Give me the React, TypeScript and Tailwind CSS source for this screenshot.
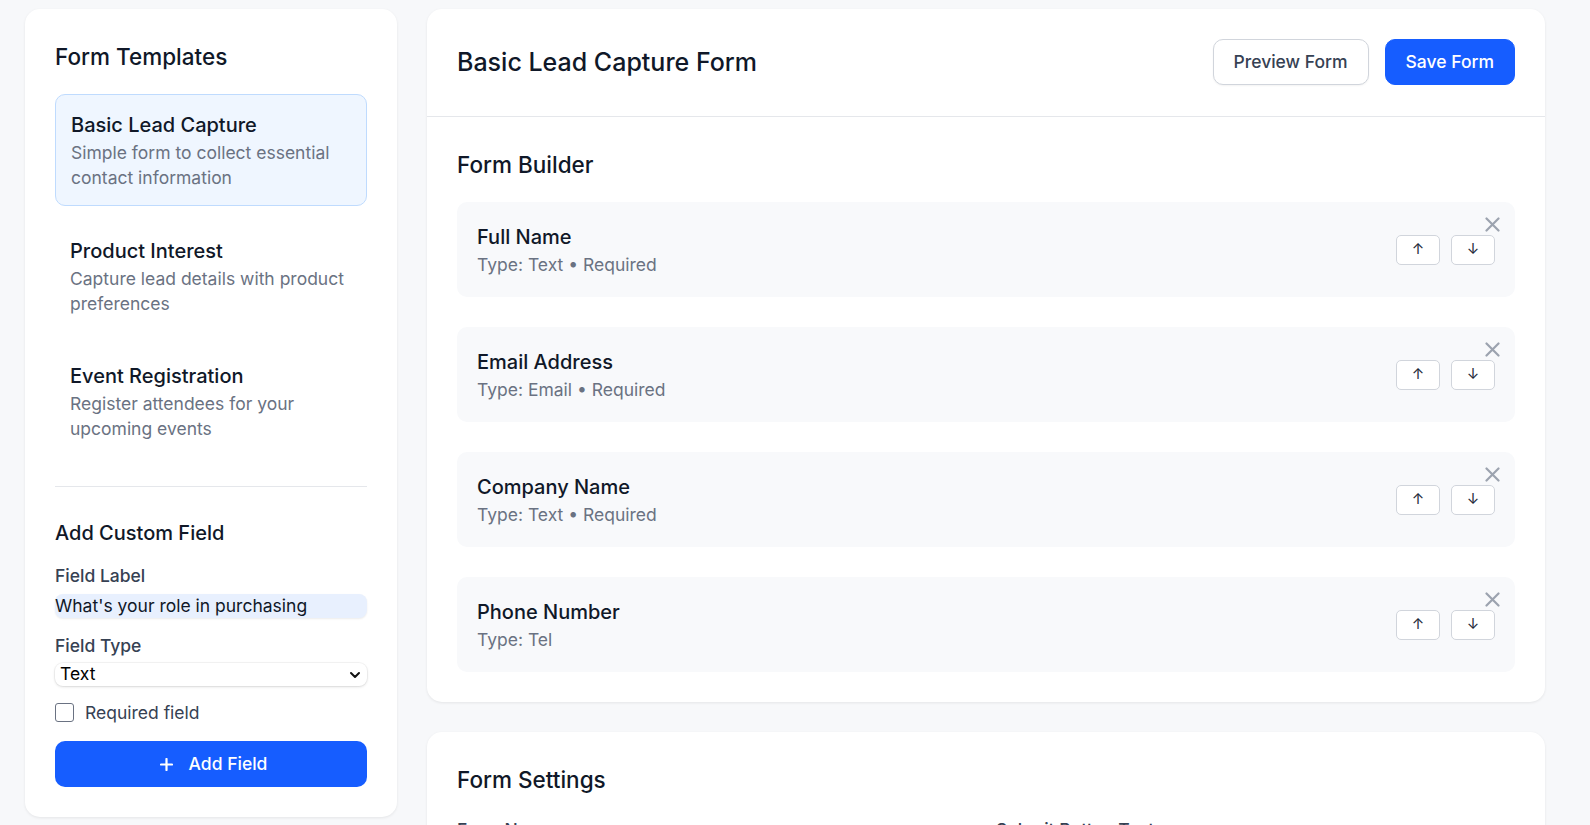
const templates = [
  {
    title: "Basic Lead Capture",
    desc: "Simple form to collect essential contact information",
    active: true,
  },
  {
    title: "Product Interest",
    desc: "Capture lead details with product preferences",
    active: false,
  },
  {
    title: "Event Registration",
    desc: "Register attendees for your upcoming events",
    active: false,
  },
];

const fields = [
  { label: "Full Name", meta: "Type: Text • Required" },
  { label: "Email Address", meta: "Type: Email • Required" },
  { label: "Company Name", meta: "Type: Text • Required" },
  { label: "Phone Number", meta: "Type: Tel" },
];

function CloseIcon() {
  return (
    <svg width="15" height="15" viewBox="0 0 15 15" fill="none">
      <path d="M1.5 1.5l12 12M13.5 1.5l-12 12" stroke="#9ca3af" strokeWidth="2.2" strokeLinecap="round" />
    </svg>
  );
}

function FieldRow({ label, meta }: { label: string; meta: string }) {
  return (
    <div className="relative flex h-[95px] items-center justify-between rounded-[10px] bg-[#f8f9fb] px-5">
      <div>
        <p className="text-[20px] leading-[30px] font-medium text-gray-900">{label}</p>
        <p className="text-[17.5px] leading-[25px] text-gray-500">{meta}</p>
      </div>
      <div className="flex gap-[11px]">
        <button className="flex h-[30px] w-[44px] items-center justify-center rounded-[5px] border border-gray-300 bg-white text-[15px] text-gray-800">
          ↑
        </button>
        <button className="flex h-[30px] w-[44px] items-center justify-center rounded-[5px] border border-gray-300 bg-white text-[15px] text-gray-800">
          ↓
        </button>
      </div>
      <span className="absolute top-[15px] right-[15px] flex">
        <CloseIcon />
      </span>
    </div>
  );
}

export default function App() {
  return (
    <div className="h-[825px] overflow-hidden bg-[#f7f8fa] pt-[9px] pl-[25px] font-['Inter',sans-serif] text-gray-900">
      <div className="flex items-start gap-[30px]">
        {/* sidebar */}
        <aside className="w-[372px] shrink-0 rounded-[15px] bg-white p-7.5 shadow-[0_1px_3px_rgba(0,0,0,0.08)]">
          <h2 className="text-[22.5px] leading-[35px] font-medium">Form Templates</h2>
          <div className="mt-5 flex flex-col gap-[15px]">
            {templates.map((t) => (
              <div
                key={t.title}
                className={
                  t.active
                    ? "rounded-[10px] border border-[#bfdbfe] bg-[#eff6ff] p-[15px]"
                    : "rounded-[10px] p-[15px]"
                }
              >
                <p className="text-[20px] leading-[30px] font-medium text-gray-900">{t.title}</p>
                <p className="text-[17.5px] leading-[25px] text-gray-500">{t.desc}</p>
              </div>
            ))}
          </div>

          <div className="mt-7.5 border-t border-gray-200 pt-[31px]">
            <h2 className="text-[20px] leading-[30px] font-medium">Add Custom Field</h2>

            <p className="mt-[15px] text-[17.5px] leading-[25px] font-medium text-gray-700">Field Label</p>
            <div className="mt-[6px] flex h-6 items-center rounded-lg bg-[#e8f0fe] text-[17.5px] text-gray-900 shadow-[0_1px_2px_rgba(0,0,0,0.08)]">
              What's your role in purchasing
            </div>

            <p className="mt-[15px] text-[17.5px] leading-[25px] font-medium text-gray-700">Field Type</p>
            <div className="mt-[5px] flex h-[23px] items-center justify-between rounded-lg bg-white pr-1.5 pl-[5px] text-[17.5px] text-black shadow-[0_0_0_1px_rgba(0,0,0,0.04),0_1px_3px_rgba(0,0,0,0.12)]">
              <span>Text</span>
              <svg width="12" height="12" viewBox="0 0 12 12" fill="none">
                <path d="M2 4l4 4 4-4" stroke="#111" strokeWidth="2" strokeLinecap="round" strokeLinejoin="round" />
              </svg>
            </div>

            <label className="mt-[14px] flex h-[25px] items-center gap-[11px]">
              <span className="h-[19px] w-[19px] rounded-[3px] border-[1.5px] border-gray-500 bg-white" />
              <span className="text-[17.5px] leading-[25px] text-gray-700">Required field</span>
            </label>

            <button className="mt-4 flex h-[46px] w-full items-center justify-center gap-4 rounded-[10px] bg-[#165dff] pl-[5px] text-[17.5px] font-medium text-white">
              <svg width="13" height="13" viewBox="0 0 13 13" fill="none">
                <path d="M6.5 1v11M1 6.5h11" stroke="white" strokeWidth="2.2" strokeLinecap="round" />
              </svg>
              Add Field
            </button>
          </div>
        </aside>

        {/* main */}
        <main className="flex w-[1118px] shrink-0 flex-col gap-[30px]">
          <section className="rounded-[15px] bg-white shadow-[0_1px_3px_rgba(0,0,0,0.08)]">
            <div className="flex items-center justify-between border-b border-gray-200 px-7.5 pt-7.5 pb-[31px]">
              <h1 className="text-[25px] leading-[35px] font-medium">Basic Lead Capture Form</h1>
              <div className="flex gap-4">
                <button className="h-[46px] rounded-[10px] border border-gray-300 bg-white px-5 text-[17.5px] font-medium text-gray-700 shadow-[0_1px_2px_rgba(0,0,0,0.05)]">
                  Preview Form
                </button>
                <button className="h-[46px] rounded-[10px] border border-[#165dff] bg-[#165dff] px-5 text-[17.5px] font-medium text-white">
                  Save Form
                </button>
              </div>
            </div>
            <div className="p-7.5">
              <h2 className="mb-5 text-[22.5px] leading-[35px] font-medium">Form Builder</h2>
              <div className="flex flex-col gap-[30px]">
                {fields.map((f) => (
                  <FieldRow key={f.label} label={f.label} meta={f.meta} />
                ))}
              </div>
            </div>
          </section>

          <section className="rounded-[15px] bg-white p-7.5 shadow-[0_1px_3px_rgba(0,0,0,0.08)]">
            <h2 className="mb-5 text-[22.5px] leading-[35px] font-medium">Form Settings</h2>
            <div className="grid grid-cols-2 gap-5">
              <div>
                <p className="text-[17.5px] leading-[25px] font-medium text-gray-700">Form Name</p>
                <div className="mt-[5px] h-[46px] rounded-[10px] border border-gray-300" />
              </div>
              <div>
                <p className="text-[17.5px] leading-[25px] font-medium text-gray-700">Submit Button Text</p>
                <div className="mt-[5px] h-[46px] rounded-[10px] border border-gray-300" />
              </div>
            </div>
          </section>
        </main>
      </div>
    </div>
  );
}
